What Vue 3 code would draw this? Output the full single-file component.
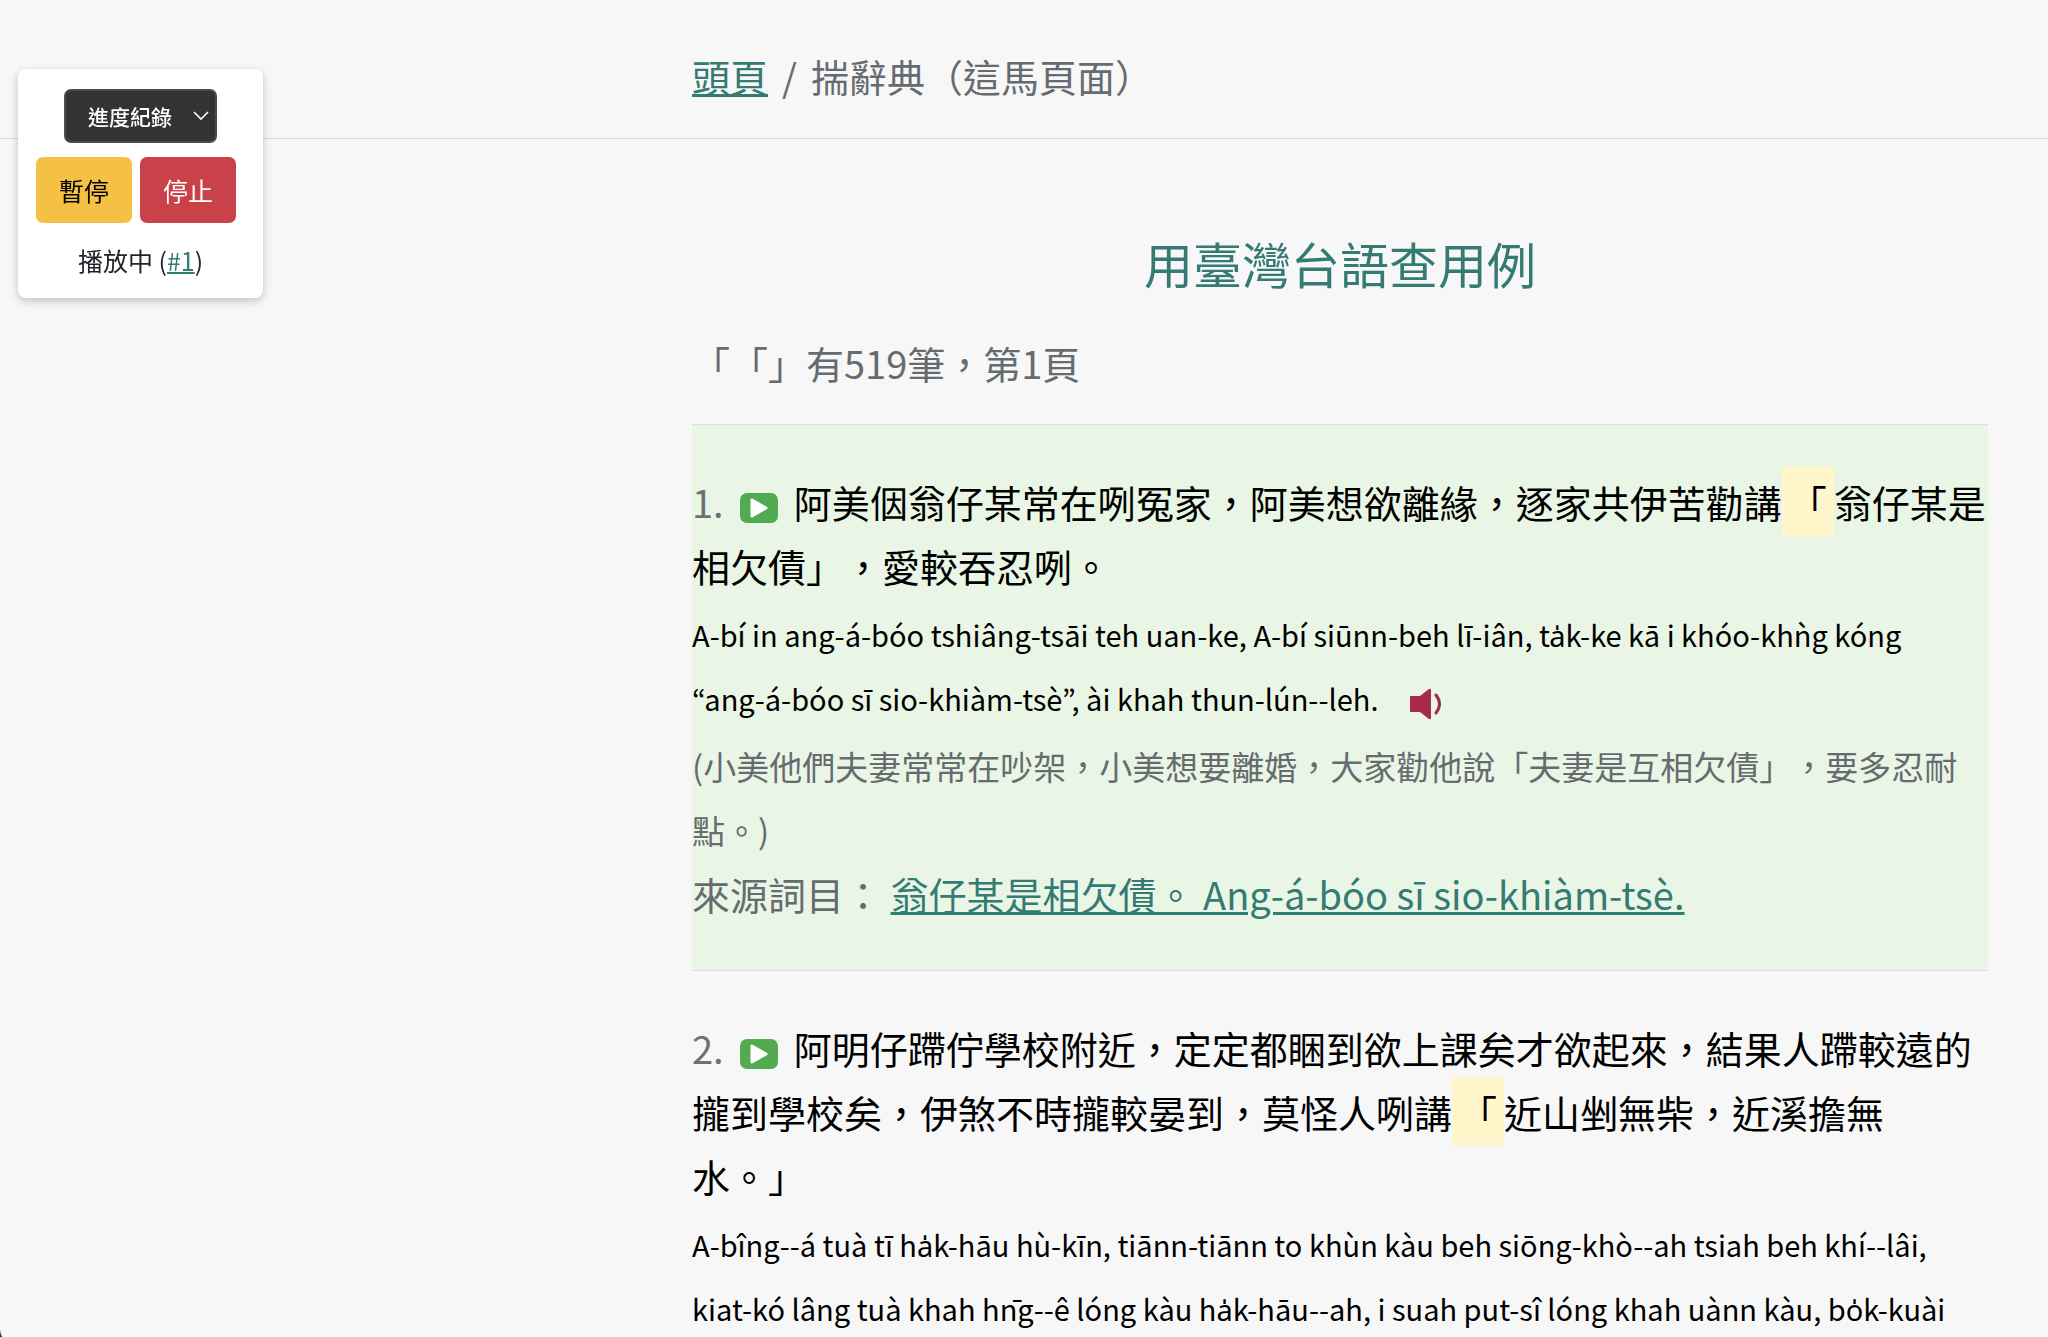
<script setup>
import { ref } from 'vue'

const speed = ref('進度紀錄')

const items = [
  {
    no: 1,
    playing: true,
    before: '阿美𪜶翁仔某常在咧冤家，阿美想欲離緣，逐家共伊苦勸講',
    after: '翁仔某是相欠債」，愛較吞忍咧。',
    lomaji: 'A-bí in ang-á-bóo tshiâng-tsāi teh uan-ke, A-bí siūnn-beh lī-iân, ta̍k-ke kā i khóo-khǹg kóng “ang-á-bóo sī sio-khiàm-tsè”, ài khah thun-lún--leh.',
    huagi: '(小美他們夫妻常常在吵架，小美想要離婚，大家勸他說「夫妻是互相欠債」，要多忍耐點。)',
    source: '翁仔某是相欠債。 Ang-á-bóo sī sio-khiàm-tsè.'
  },
  {
    no: 2,
    playing: false,
    before: '阿明仔蹛佇學校附近，定定都睏到欲上課矣才欲起來，結果人蹛較遠的攏到學校矣，伊煞不時攏較晏到，莫怪人咧講',
    after: '近山剉無柴，近溪擔無水。」',
    lomaji: 'A-bîng--á tuà tī ha̍k-hāu hù-kīn, tiānn-tiānn to khùn kàu beh siōng-khò--ah tsiah beh khí--lâi, kiat-kó lâng tuà khah hn̄g--ê lóng kàu ha̍k-hāu--ah, i suah put-sî lóng khah uànn kàu, bo̍k-kuài'
  }
]
</script>

<template>
  <div class="page">
    <header class="topbar columns">
      <nav class="breadcrumb">
        <a href="#">頭頁</a>
        <span>/</span>
        <span>揣辭典（這馬頁面）</span>
      </nav>
    </header>

    <main class="columns">
      <div class="content">
        <h1>用臺灣台語查用例</h1>
        <p class="summary">「「」有519筆，第1頁</p>
        <ol class="list">
          <li v-for="item in items" :id="`li-${item.no}`" :key="item.no" class="item" :class="{ playing: item.playing }">
            <p class="hanji">
              <span class="no">{{ item.no }}.</span>
              <button class="play" type="button" aria-label="播放">
                <svg viewBox="0 0 38 30" width="38" height="30">
                  <path d="M12 7v16l14-8z" fill="#fff" stroke="#fff" stroke-width="3" stroke-linejoin="round" />
                </svg>
              </button>
              <span>{{ item.before }}</span><mark>「</mark><span>{{ item.after }}</span>
            </p>
            <p class="lomaji">
              {{ item.lomaji }}
              <button v-if="item.source" class="sound" type="button" aria-label="聽發音">
                <svg viewBox="0 0 34 32" width="34" height="32">
                  <path d="M2 8h9l9-7q2-1 2 1v28q0 2-2 1L11 24H2q-1 0-1-1V9q0-1 1-1z" fill="#a82a4a" />
                  <path d="M27 7q7 9 0 18" fill="none" stroke="#a82a4a" stroke-width="3" stroke-linecap="round" />
                </svg>
              </button>
            </p>
            <p v-if="item.huagi" class="huagi">{{ item.huagi }}</p>
            <p v-if="item.source" class="source">來源詞目： <a href="#">{{ item.source }}</a></p>
          </li>
        </ol>
      </div>
    </main>

    <aside class="player">
      <select v-model="speed" aria-label="進度紀錄">
        <option>進度紀錄</option>
      </select>
      <div class="buttons">
        <button class="btn pause" type="button">暫停</button>
        <button class="btn stop" type="button">停止</button>
      </div>
      <div class="status">播放中 (<a href="#li-1">#1</a>)</div>
    </aside>
    <div class="corner"></div>
  </div>
</template>

<style>
body {
  background: #f7f7f7;
}
</style>

<style scoped>
.page {
  height: 100vh;
  overflow: hidden;
  color: #666b70;
  font-family: "Noto Sans CJK TC", "Noto Sans", sans-serif;
  font-size: 38px;
  line-height: 64px;
  text-spacing-trim: space-all;
}
.columns {
  display: grid;
  grid-template-columns: 1fr 2fr;
  column-gap: 44px;
  padding-right: 60px;
}
.columns > * {
  grid-column: 2;
}
.topbar {
  padding-top: 44px;
  padding-bottom: 30px;
  border-bottom: 1px solid #d5d8da;
}
.breadcrumb {
  display: flex;
  gap: 14px;
}
a {
  color: #347b74;
  text-decoration-thickness: 3px;
}
h1 {
  margin: 88px 0 32px;
  color: #347b74;
  font-size: 49px;
  font-weight: 400;
  line-height: 72px;
  text-align: center;
}
p {
  margin: 0;
}
.list {
  margin: 29px 0 0;
  padding: 0;
  list-style: none;
}
.item {
  padding: 45px 0 44px;
  border-top: 1px solid #d9e0dc;
}
.playing {
  background: #eaf6e5;
}
.hanji {
  color: #000;
}
.no {
  color: #6c7175;
}
.play {
  margin: 0 16px;
  padding: 0;
  border: 0;
  border-radius: 7px;
  background: #52ab50;
  line-height: 0;
  vertical-align: -5px;
}
mark {
  padding: 7px;
  background: #fff6cb;
  color: #000;
}
/* the KR cut has proportional quotation marks */
.lomaji {
  margin-top: 4px;
  padding-right: 12px;
  color: #000;
  font-family: "Noto Sans CJK KR", "Noto Sans", sans-serif;
  font-size: 29px;
}
.sound {
  margin-left: 24px;
  padding: 0;
  border: 0;
  background: none;
  line-height: 0;
  vertical-align: -9px;
}
.huagi {
  margin-top: 4px;
  font-size: 33px;
}
.player {
  position: fixed;
  top: 69px;
  left: 18px;
  display: flex;
  flex-direction: column;
  align-items: center;
  gap: 14px;
  box-sizing: border-box;
  padding: 20px 18px;
  border-radius: 8px;
  background: #fff;
  box-shadow: 0 3px 9px rgba(0, 0, 0, 0.22);
  color: #212529;
  font-size: 25px;
  line-height: 36px;
}
.player a {
  text-decoration-thickness: 2px;
}
.player select {
  appearance: none;
  padding: 8px 43px 8px 22px;
  border: 2px solid #4c4c4c;
  border-radius: 7px;
  background: #333 url("data:image/svg+xml,%3Csvg xmlns='http://www.w3.org/2000/svg' width='16' height='10' fill='none' stroke='%23fff' stroke-width='1.6'%3E%3Cpath d='M1 1l7 7 7-7'/%3E%3C/svg%3E") no-repeat right 6px center;
  color: #fff;
  font: 500 21px/34px "Noto Sans CJK TC", sans-serif;
}
.buttons {
  display: flex;
  gap: 8px;
  padding-right: 9px;
}
.btn {
  padding: 15px 23px;
  border: 0;
  border-radius: 7px;
  font: 400 25px/36px "Noto Sans CJK TC", sans-serif;
}
.pause {
  background: #f5c144;
  color: #000;
}
.stop {
  background: #ca4249;
  color: #fff;
}
.status {
  padding-top: 5px;
}
.corner {
  position: fixed;
  bottom: 0;
  left: 0;
  width: 4px;
  height: 14px;
  background: radial-gradient(ellipse at 100% 0, transparent 70%, #111 90%);
}
</style>
